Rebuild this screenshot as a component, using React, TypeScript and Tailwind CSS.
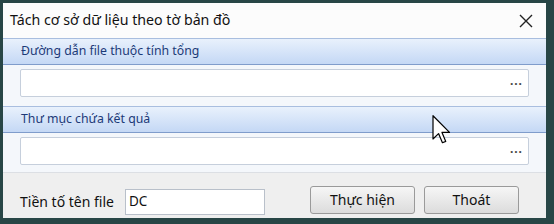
import React from "react";

const font = { fontFamily: '"Segoe UI", "Noto Sans", "Open Sans", sans-serif' };

function Header({ text }: { text: string }) {
  return (
    <div className="h-[27px] border-t border-t-[#a9bedf] border-b border-b-[#7f9ccb] bg-gradient-to-b from-[#e9f1fc] to-[#c4d8f5] flex items-center pl-[18px]">
      <span className="text-[12.3px] text-[#1c3a78] leading-none">{text}</span>
    </div>
  );
}

function PathInput() {
  return (
    <div className="h-[28px] ml-[17px] mr-[17px] bg-white border border-[#c6cfdc] rounded-[2px] flex items-center justify-end pr-[5px]">
      <span className="text-[12px] font-bold text-[#444] tracking-[1px] leading-none -mt-[4px]">...</span>
    </div>
  );
}

export default function App() {
  return (
    <div className="relative w-[554px] h-[224px] bg-[#284646] pt-[3px] pl-[3px]" style={font}>
      <div className="w-[543px] h-[215px] bg-[#f4f7fb] flex flex-col overflow-hidden">
        {/* title bar */}
        <div className="h-[35px] bg-[#fcfcfc] flex items-center justify-between pl-[7px] pr-[13px]">
          <span className="text-[14.2px] text-[#111] leading-none">Tách cơ sở dữ liệu theo tờ bản đồ</span>
          <svg width="14" height="14" viewBox="0 0 14 14">
            <path d="M1 1 L13 13 M13 1 L1 13" stroke="#222" strokeWidth="1.4" />
          </svg>
        </div>
        <Header text="Đường dẫn file thuộc tính tổng" />
        <div className="h-[41px] pt-[4px]">
          <PathInput />
        </div>
        <Header text="Thư mục chứa kết quả" />
        <div className="h-[39px] pt-[4px]">
          <PathInput />
        </div>
        <div className="flex-1 bg-[#efefef] border-t border-t-[#dcdfe4] flex items-end pb-[2px] pl-[17px]">
          <div className="flex items-center h-[26px] mb-[1px]">
            <span className="w-[105px] text-[14px] text-[#111] leading-none">Tiền tố tên file</span>
            <div className="w-[140px] h-[26px] bg-white border border-[#b9c0ca] flex items-center pl-[3px]">
              <span className="text-[13.5px] text-[#111] leading-none">DC</span>
            </div>
          </div>
          <div className="flex ml-[45px] mb-[2px] gap-[9px]">
            <button className="w-[105px] h-[28px] rounded-[3px] border border-[#9a9a9a] bg-gradient-to-b from-[#f6f6f6] to-[#dcdcdc] text-[14px] text-[#111] leading-none">
              Thực hiện
            </button>
            <button className="w-[95px] h-[28px] rounded-[3px] border border-[#9a9a9a] bg-gradient-to-b from-[#f6f6f6] to-[#dcdcdc] text-[14px] text-[#111] leading-none">
              Thoát
            </button>
          </div>
        </div>
      </div>
      {/* mouse cursor */}
      <svg className="absolute left-[432px] top-[115px]" width="20" height="30" viewBox="0 0 13 20">
        <path
          d="M0.5 0.5 L0.5 16 L4.2 12.4 L6.8 18.5 L9 17.6 L6.5 11.6 L11.5 11.6 Z"
          fill="#fff"
          stroke="#000"
          strokeWidth="0.8"
          strokeLinejoin="round"
        />
      </svg>
    </div>
  );
}
